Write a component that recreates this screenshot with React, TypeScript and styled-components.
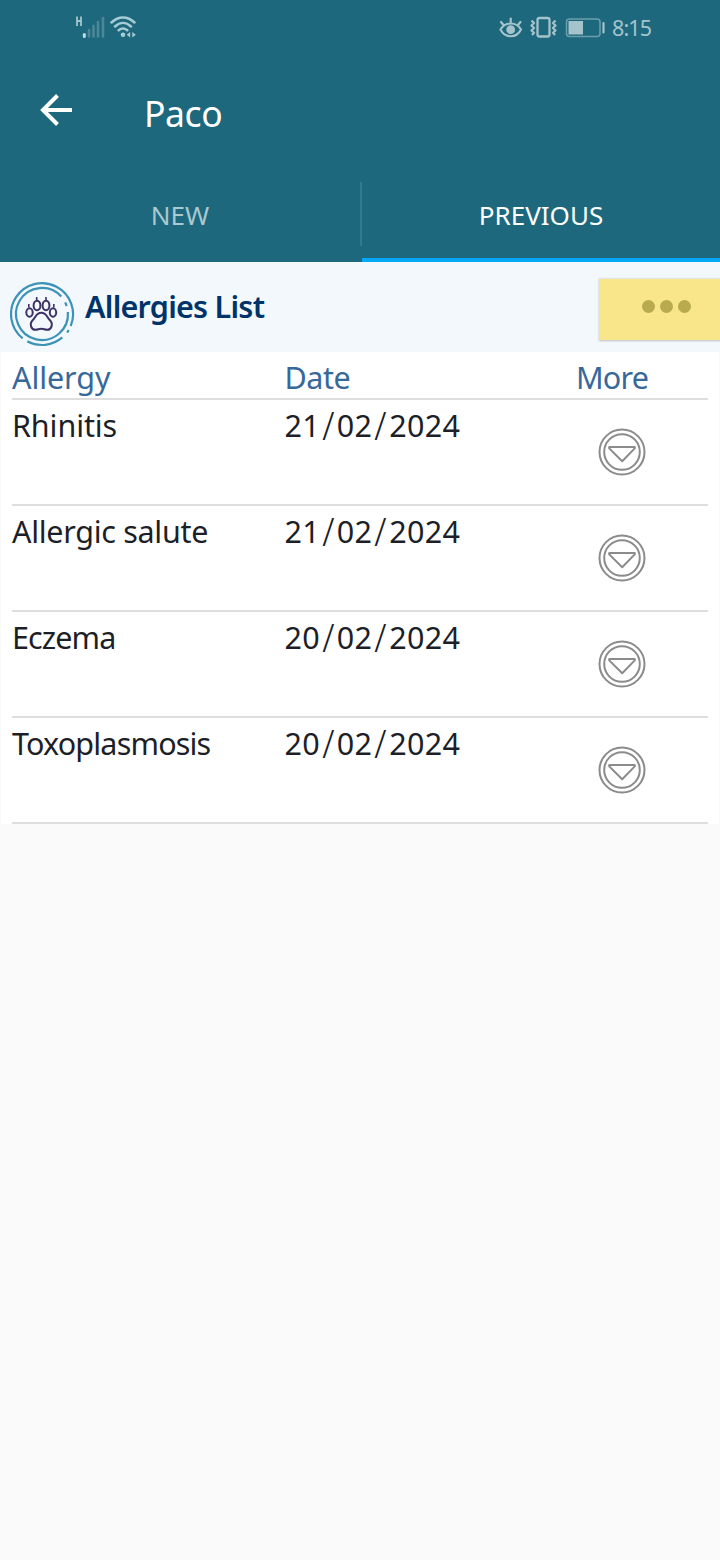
import React from "react";
import styled, { createGlobalStyle } from "styled-components";

const GlobalStyle = createGlobalStyle`
  * { box-sizing: border-box; }
  body { margin: 0; background: #fafafa; font-family: "Noto Sans", "Open Sans", sans-serif; }
`;

const Screen = styled.main`
  width: 720px;
  min-height: 1560px;
  background: #fafafa;
`;

const Header = styled.header`
  height: 262px;
  background: #1d687c;
  display: flex;
  flex-direction: column;
`;

const StatusBar = styled.div`
  height: 56px;
  display: flex;
  justify-content: space-between;
  align-items: center;
  padding: 0 68px 0 72px;
`;

const StatusGroup = styled.div<{ $gap: number }>`
  display: flex;
  align-items: center;
  gap: ${(p) => p.$gap}px;
  height: 56px;
`;

const Clock = styled.span`
  width: 40px;
  font-family: "Noto Sans", sans-serif;
  font-size: 21.5px;
  line-height: 58px;
  letter-spacing: -0.9px;
  white-space: nowrap;
  color: #a5c3cb;
`;

const TitleBar = styled.div`
  height: 112px;
  display: flex;
  align-items: center;
  padding: 0 40px;
`;

const BackButton = styled.button`
  border: 0;
  padding: 0;
  background: none;
  width: 32px;
  height: 32px;
  margin-top: -4px;
  display: flex;
`;

const Title = styled.h1`
  margin: 2px 0 0 72px;
  font-size: 35.5px;
  font-weight: 400;
  line-height: 48px;
  letter-spacing: -0.4px;
  color: #fff;
`;

const Tabs = styled.nav`
  height: 94px;
  display: flex;
`;

const Tab = styled.div<{ $active?: boolean }>`
  width: ${(p) => (p.$active ? 358 : 360)}px;
  display: flex;
  align-items: center;
  justify-content: center;
  padding-top: 4px;
  border-bottom: 4px solid ${(p) => (p.$active ? "#03a9f4" : "transparent")};
  color: ${(p) => (p.$active ? "#fff" : "#a9c8d0")};
  font-size: 26px;
`;

const TabDivider = styled.div`
  width: 2px;
  height: 64px;
  margin-top: 14px;
  background: #357a8c;
`;

const ListHeader = styled.section`
  height: 90px;
  display: flex;
  align-items: flex-start;
  background: #f3f8fc;
  padding: 16px 0 0 10px;
`;

const ListTitle = styled.h2`
  flex: 1;
  margin: 6px 0 0 9px;
  font-size: 30.5px;
  line-height: 44px;
  font-weight: 600;
  letter-spacing: -0.75px;
  color: #00336a;
`;

const MenuButton = styled.button`
  width: 121px;
  height: 61px;
  border: 0;
  margin-top: 1px;
  padding: 0 0 7px 13px;
  display: flex;
  align-items: center;
  justify-content: center;
  gap: 5px;
  background: #f9e68a;
  box-shadow: 0 0 2px 0.5px #b9bdc0;
`;

const Dot = styled.span`
  width: 13px;
  height: 13px;
  border-radius: 50%;
  background: #b9a94f;
`;

const Table = styled.section`
  margin: 0 1px;
  padding: 0 11px;
  background: #fff;
`;

const Row = styled.div<{ $head?: boolean }>`
  display: grid;
  grid-template-columns: 272.5px 291.5px 1fr;
  height: ${(p) => (p.$head ? 48 : 106)}px;
  border-bottom: 2px solid #dedede;
  color: ${(p) => (p.$head ? "#38689a" : "#1d1f28")};
`;

const Cell = styled.div<{ $spacing?: number }>`
  padding-top: 3px;
  font-size: 30.5px;
  line-height: 44px;
  white-space: nowrap;
  letter-spacing: ${(p) => p.$spacing ?? 0}px;
`;

const Slash = styled.span`
  display: inline-block;
  margin: 0 2.9px;
  font-weight: 300;
  transform: scale(1.15, 1.27);
`;

const ActionCell = styled.div`
  padding: 28px 0 0 22px;
`;

const SignalIcon = () => (
  <svg width="34" height="28" viewBox="0 0 34 28" fill="none">
    <path d="M5 2.500v9.500M9 2.500v9.500M5 7h4" stroke="#a5c3cb" strokeWidth="1.800" />
    <path d="M12.300 20.500v2" stroke="#b9e0e8" strokeWidth="3" strokeLinecap="round" />
    <path d="M17 16v6.500M21.500 12v10.500M26 8v14.500M31 4v18.500" stroke="#4b8797" strokeWidth="2.600" strokeLinecap="round" />
  </svg>
);

const WifiIcon = () => (
  <svg width="28" height="28" viewBox="0 0 28 28" fill="none">
    <path
      d="M1.500 8.500C8.500 1.800 17.500 1.800 24.500 8.500M5 12.500C10 7.800 16 7.800 21 12.500M8.700 16.300C11.500 14 14.500 14 17.300 16.300"
      stroke="#a8ccd5"
      strokeWidth="2.500"
      strokeLinecap="round"
    />
    <circle cx="13" cy="20.700" r="2.300" fill="#a8ccd5" />
    <path d="M16.700 20.700l3.500-2.800v5.600zM25.800 20.700l-3.500-2.800v5.600z" fill="#a8ccd5" />
  </svg>
);

const EyeIcon = () => (
  <svg width="24" height="24" viewBox="0 0 24 24" fill="none" stroke="#a5c3cb" strokeWidth="2.200" strokeLinecap="round">
    <path d="M1.500 13.500C6 5.500 17.500 5.500 22 13.500C17.500 22.500 6 22.500 1.500 13.500zM11.700 2.500v4M2 6l2.500 3M21.500 6l-2.500 3" />
    <circle cx="11.700" cy="13.700" r="4.400" fill="#a5c3cb" stroke="none" />
  </svg>
);

const VibrateIcon = () => (
  <svg width="28" height="24" viewBox="0 0 28 24" fill="none" stroke="#a5c3cb">
    <rect x="7.500" y="2" width="12" height="18.500" rx="2" strokeWidth="2.300" />
    <path
      d="M1.500 4.500l2.500 2.500L1.500 9.500l2.500 2.500L1.500 14.500l2.500 2.300L2 19M25.500 4.500L23 7l2.500 2.500L23 12l2.500 2.500L23 16.800L25 19"
      strokeWidth="2.200"
      strokeLinejoin="round"
    />
  </svg>
);

const BatteryIcon = () => (
  <svg width="40" height="20" viewBox="0 0 40 20" fill="none">
    <rect x="1.500" y="1" width="33.500" height="17.500" rx="3" stroke="#6c9fac" strokeWidth="1.500" />
    <rect x="3.500" y="3" width="14.500" height="13.500" fill="#a5c3cb" />
    <path d="M38.500 5v9.500" stroke="#a5c3cb" strokeWidth="2.200" strokeLinecap="round" />
  </svg>
);

const BackIcon = () => (
  <svg width="32" height="32" viewBox="0 0 32 32" fill="none" stroke="#fff" strokeWidth="4">
    <path d="M17.500 1.500L3 16l14.500 14.500M3 16h29" />
  </svg>
);

const PawBadge = () => (
  <svg width="66" height="70" viewBox="0 0 66 70" fill="none" strokeWidth="2.200">
    <g stroke="#3d93b7">
      <path d="M12.700 60.400A31 31 0 1 1 60.700 48M58.700 52l-1.600 2.600M52.300 59.400A31 31 0 0 1 17.300 63.300" />
      <path d="M51.300 18.600A26 26 0 1 0 57.900 34M55.200 24.300l1.500 3.700" />
    </g>
    <g stroke="#3c3266" strokeWidth="2">
      <ellipse cx="27" cy="27.500" rx="3.400" ry="4.800" />
      <ellipse cx="36" cy="27.500" rx="3.400" ry="4.800" />
      <ellipse cx="19.500" cy="34.500" rx="3.200" ry="4.200" />
      <ellipse cx="43" cy="34.500" rx="3.200" ry="4.200" />
      <path d="M26.700 19v3.500M36 19v3.500M18.800 26v3.500M43.800 26v3.500" strokeWidth="1.600" />
      <path d="M31.300 34.800c-5.500 0-5.500 4.500-8.200 7-4.300 4-2 10.200 2.500 10 2.400-.1 3.200-1 5.700-1s3.300.9 5.700 1c4.500.2 6.800-6 2.500-10-2.700-2.500-2.700-7-8.200-7z" />
    </g>
  </svg>
);

const ExpandIcon = () => (
  <svg width="48" height="48" viewBox="0 0 48 48" fill="none" stroke="#8b8b8b" strokeWidth="2" strokeLinejoin="round">
    <circle cx="24" cy="24" r="22.500" />
    <circle cx="24" cy="24" r="17.800" />
    <path d="M11.700 19h24.600c.8 0 .8 1 .2 1.600L24.200 33.300 11.500 20.600c-.6-.6-.6-1.600.2-1.600z" />
  </svg>
);

const DateText = ({ value }: { value: string }) => (
  <>
    {value.split("/").map((part, i) => (
      <React.Fragment key={i}>
        {i > 0 && <Slash>/</Slash>}
        {part}
      </React.Fragment>
    ))}
  </>
);

const allergies = [
  { name: "Rhinitis", date: "21/02/2024", spacing: -0.1 },
  { name: "Allergic salute", date: "21/02/2024", spacing: -0.3 },
  { name: "Eczema", date: "20/02/2024", spacing: -0.9 },
  { name: "Toxoplasmosis", date: "20/02/2024", spacing: -0.82 },
];

export default function App() {
  return (
    <Screen>
      <GlobalStyle />
      <Header>
        <StatusBar>
          <StatusGroup $gap={4}>
            <SignalIcon />
            <WifiIcon />
          </StatusGroup>
          <StatusGroup $gap={7}>
            <EyeIcon />
            <VibrateIcon />
            <BatteryIcon />
            <Clock>8:15</Clock>
          </StatusGroup>
        </StatusBar>
        <TitleBar>
          <BackButton aria-label="Back">
            <BackIcon />
          </BackButton>
          <Title>Paco</Title>
        </TitleBar>
        <Tabs>
          <Tab>NEW</Tab>
          <TabDivider />
          <Tab $active>PREVIOUS</Tab>
        </Tabs>
      </Header>
      <ListHeader>
        <PawBadge />
        <ListTitle>Allergies List</ListTitle>
        <MenuButton aria-label="Options">
          <Dot />
          <Dot />
          <Dot />
        </MenuButton>
      </ListHeader>
      <Table>
        <Row $head>
          <Cell $spacing={-0.1}>Allergy</Cell>
          <Cell $spacing={-0.5}>Date</Cell>
          <Cell $spacing={-0.8}>More</Cell>
        </Row>
        {allergies.map((a) => (
          <Row key={a.name}>
            <Cell $spacing={a.spacing}>{a.name}</Cell>
            <Cell $spacing={0.35}>
              <DateText value={a.date} />
            </Cell>
            <ActionCell>
              <ExpandIcon />
            </ActionCell>
          </Row>
        ))}
      </Table>
    </Screen>
  );
}
